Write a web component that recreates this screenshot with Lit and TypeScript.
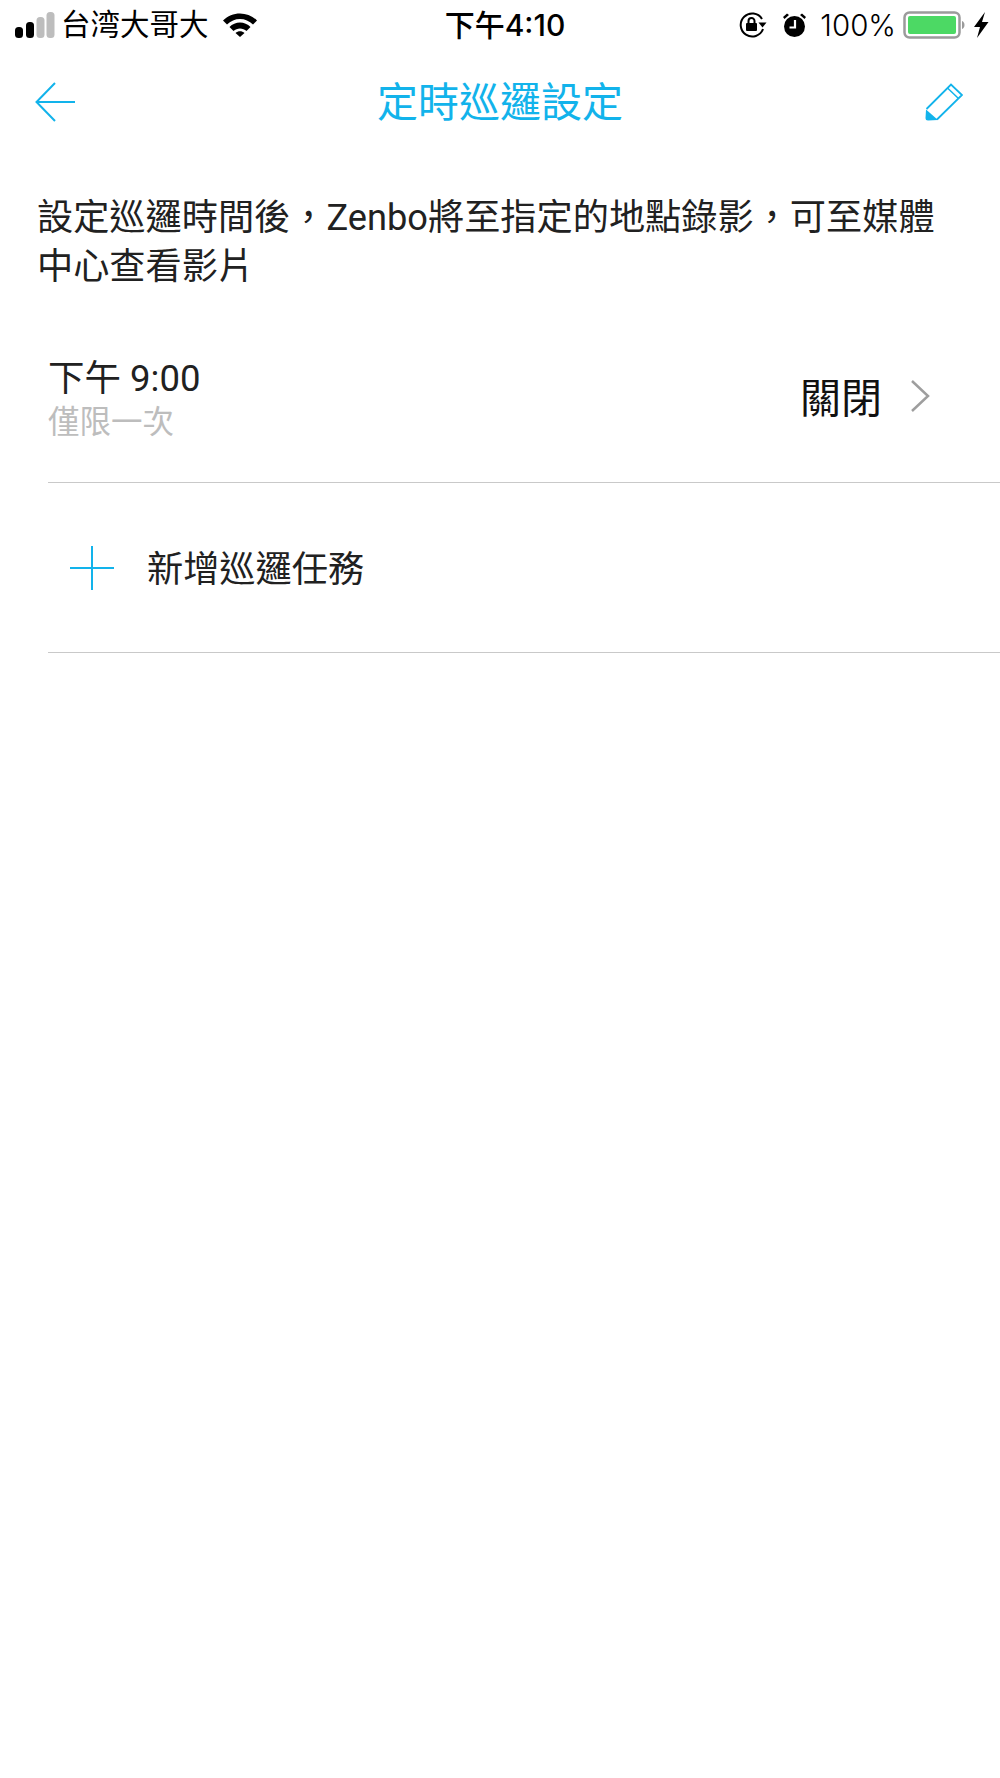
import { LitElement, html, css } from "lit";
import { customElement } from "lit/decorators.js";

@customElement("app-root")
export class AppRoot extends LitElement {
  static styles = css`
    :host { display: block; width: 1000px; height: 1778px; background: #fff; overflow: hidden;
      font-family: "Roboto", "Noto Sans CJK TC", "Noto Sans", sans-serif; color: #212121; }
    .status { height: 50px; display: grid; grid-template-columns: 1fr auto 1fr; align-items: center; color: #000; font-size: 29.5px; }
    .s-left { display: flex; align-items: center; padding-left: 15px; }
    .carrier { margin-left: 6px; line-height: 50px; }
    .wifi { margin-left: 14px; }
    .clock { font-weight: 500; font-size: 30px; line-height: 50px; padding-left: 10px; font-family: "Inter", "Noto Sans CJK TC", sans-serif; }
    .s-right { display: flex; align-items: center; justify-content: flex-end; padding-right: 11px; }
    .pct { font-family: "Inter", "Noto Sans", sans-serif; font-size: 29.5px; font-weight: 300; margin: 0 7px 0 13px; line-height: 50px; }
    .alarm { margin-left: 14px; }
    .bolt { margin-left: 8px; }
    .lock { margin-right: 1px; }
    .nav { height: 103px; display: grid; grid-template-columns: 1fr auto 1fr; align-items: center; color: #12b3eb; }
    .title { font-size: 41px; line-height: 99px; padding-top: 4px; }
    .back { padding-left: 35px; display: flex; }
    .edit { display: flex; justify-content: flex-end; padding-right: 37px; }
    .desc { margin: 0; padding: 40px 33px 0 37px; font-size: 36.2px; line-height: 49px; }
    .row { margin-left: 48px; display: flex; align-items: center; }
    .alarm-row { height: 172px; margin-top: 19px; border-bottom: 1px solid #c9c9c9; justify-content: space-between; }
    .info { padding-top: 5px; }
    .time { font-size: 36.5px; line-height: 49px; }
    .sub { font-size: 31.5px; line-height: 40px; color: #bdbdbd; }
    .state { display: flex; align-items: center; margin-right: 70px; color: #111; font-size: 41px; }
    .state span { margin-bottom: 2px; }
    .state svg { margin-left: 28px; }
    .add-row { height: 169px; border-bottom: 1px solid #c9c9c9; font-size: 36.2px; }
    .add-row svg { margin-left: 22px; margin-right: 33px; }
    .add-row span { margin-bottom: 4px; }
    svg { display: block; flex: none; }
  `;

  render() {
    return html`
      <div class="status">
        <div class="s-left">
          <svg width="40" height="26" viewBox="0 0 40 26">
            <rect x="0" y="15" width="8" height="11" rx="3.500" fill="#000"/>
            <rect x="11" y="10" width="8" height="16" rx="3.500" fill="#000"/>
            <rect x="21.500" y="5" width="8" height="21" rx="3.500" fill="#bdbdbd"/>
            <rect x="31.500" y="0" width="8" height="26" rx="3.500" fill="#bdbdbd"/>
          </svg>
          <span class="carrier">台湾大哥大</span>
          <svg class="wifi" width="34" height="24" viewBox="0 0 34 24">
            <path d="M0 7.500C9 -2 25 -2 34 7.500L30 11.500C23 4 11 4 4 11.500Z" fill="#000"/>
            <path d="M6.500 14C12 8 22 8 27.500 14L23.500 18C20 14.500 14 14.500 10.500 18Z" fill="#000"/>
            <path d="M12.500 20C15 17.500 19 17.500 21.500 20L17 24Z" fill="#000"/>
          </svg>
        </div>
        <div class="clock">下午4:10</div>
        <div class="s-right">
          <svg class="lock" width="28" height="26" viewBox="0 0 28 26" fill="none">
            <path d="M23 7A11.500 11.500 0 1 0 24 17" stroke="#000" stroke-width="2"/>
            <path d="M19.500 10.500L27.500 10.500L23.500 15.500Z" fill="#000"/>
            <rect x="7" y="11" width="11" height="8" rx="1" fill="#000"/>
            <path d="M9.500 11V9A3 3 0 0 1 15.500 9V11" stroke="#000" stroke-width="2"/>
          </svg>
          <svg class="alarm" width="25" height="26" viewBox="0 0 25 26">
            <circle cx="12.500" cy="14.500" r="10.500" fill="#000"/>
            <path d="M1 5L5 1.500L7 3L2.500 7ZM24 5L20 1.500L18 3L22.500 7Z" fill="#000"/>
            <path d="M13 8V15.500H7.500" stroke="#fff" stroke-width="2.200" fill="none"/>
          </svg>
          <span class="pct">100%</span>
          <svg width="62" height="28" viewBox="0 0 62 28">
            <rect x="1.500" y="1.500" width="55" height="25" rx="5" fill="#fff" stroke="#9b9b9b" stroke-width="2.500"/>
            <rect x="5" y="5" width="48" height="18" rx="2" fill="#4cd964"/>
            <path d="M59 10C60.500 10.500 61.500 12 61.500 14C61.500 16 60.500 17.500 59 18Z" fill="#9b9b9b"/>
          </svg>
          <svg class="bolt" width="16" height="26" viewBox="0 0 16 26">
            <path d="M12 0L1 15H7L4 26L15.500 10H9Z" fill="#000"/>
          </svg>
        </div>
      </div>
      <div class="nav">
        <div class="back">
          <svg width="41" height="40" viewBox="0 0 41 40" fill="none" stroke="#12b3eb" stroke-width="2">
            <path d="M20 1L1.500 20L20 39M1.500 20H40"/>
          </svg>
        </div>
        <div class="title">定時巡邏設定</div>
        <div class="edit">
          <svg width="38" height="38" viewBox="0 0 38 38" fill="none">
            <path d="M1.500 26L26 1.500L37 12L12 36.500" stroke="#12b3eb" stroke-width="1.800"/>
            <path d="M22.500 5L33.500 15.500" stroke="#12b3eb" stroke-width="1.500"/>
            <path d="M1 26.500L13 37L3 37.500A2.500 2.500 0 0 1 0.500 35Z" fill="#12b3eb"/>
          </svg>
        </div>
      </div>
      <p class="desc">設定巡邏時間後，Zenbo將至指定的地點錄影，可至媒體中心查看影片</p>
      <div class="row alarm-row">
        <div class="info">
          <div class="time">下午 9:00</div>
          <div class="sub">僅限一次</div>
        </div>
        <div class="state">
          <span>關閉</span>
          <svg width="20" height="34" viewBox="0 0 20 34" fill="none" stroke="#9e9e9e" stroke-width="2.500">
            <path d="M2 2L18 17L2 32"/>
          </svg>
        </div>
      </div>
      <div class="row add-row">
        <svg width="44" height="44" viewBox="0 0 44 44" stroke="#12b3eb" stroke-width="2">
          <path d="M22 0V44M0 22H44"/>
        </svg>
        <span>新增巡邏任務</span>
      </div>
    `;
  }
}
